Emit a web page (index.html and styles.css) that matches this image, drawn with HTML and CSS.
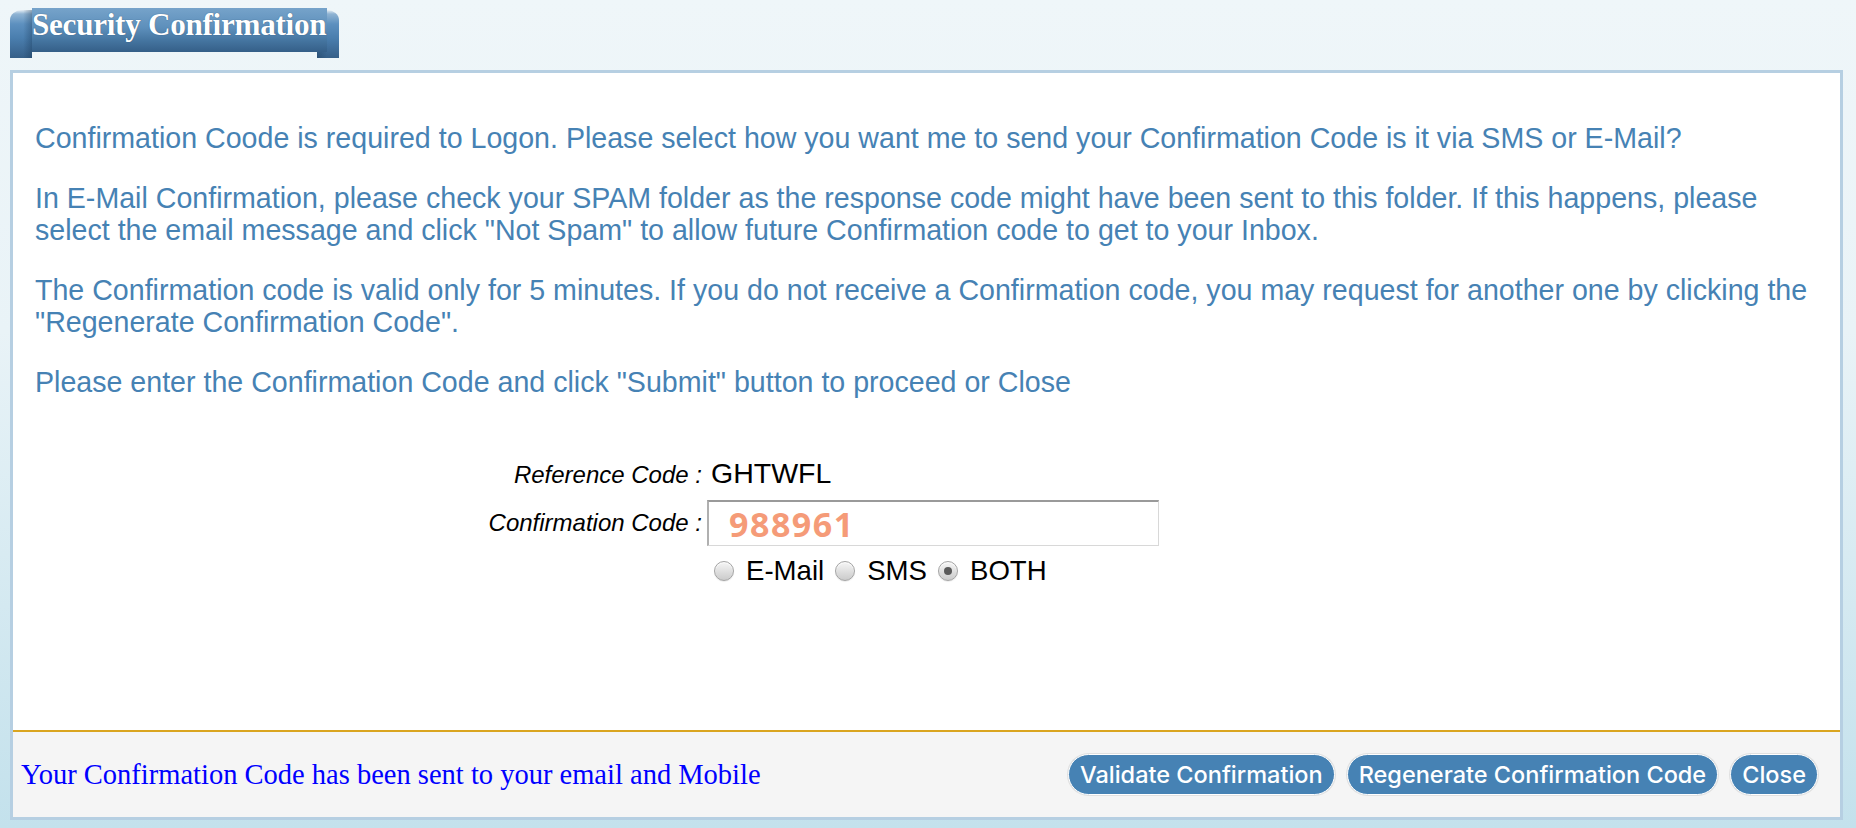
FILE: index.html
```html
<!DOCTYPE html>
<html>
<head>
<meta charset="utf-8">
<title>Security Confirmation</title>
<link rel="stylesheet" href="styles.css">
</head>
<body>
<div class="page">
  <div class="tab">
    <span class="cap cap-left"></span>
    <h1 class="tab-title">Security Confirmation</h1>
    <span class="cap cap-right"></span>
  </div>
  <div class="panel">
    <div class="content">
      <p class="msg">Confirmation Coode is required to Logon. Please select how you want me to send your Confirmation Code is it via SMS or E-Mail?</p>
      <p class="msg">In E-Mail Confirmation, please check your SPAM folder as the response code might have been sent to this folder. If this happens, please select the email message and click "Not Spam" to allow future Confirmation code to get to your Inbox.</p>
      <p class="msg">The Confirmation code is valid only for 5 minutes. If you do not receive a Confirmation code, you may request for another one by clicking the "Regenerate Confirmation Code".</p>
      <p class="msg">Please enter the Confirmation Code and click "Submit" button to proceed or Close</p>
      <div class="form">
        <label class="lbl">Reference Code :</label>
        <div class="ref">GHTWFL</div>
        <label class="lbl" for="code">Confirmation Code :</label>
        <input id="code" class="code" type="text" value="988961">
        <div></div>
        <div class="radios">
          <label class="opt"><input type="radio" name="via" class="rb"><span>E-Mail</span></label>
          <label class="opt"><input type="radio" name="via" class="rb"><span>SMS</span></label>
          <label class="opt"><input type="radio" name="via" class="rb" checked><span>BOTH</span></label>
        </div>
      </div>
    </div>
    <div class="footer">
      <div class="status">Your Confirmation Code has been sent to your email and Mobile</div>
      <div class="actions">
        <button class="btn">Validate Confirmation</button>
        <button class="btn">Regenerate Confirmation Code</button>
        <button class="btn">Close</button>
      </div>
    </div>
  </div>
</div>
</body>
</html>
```
FILE: styles.css
```css
html, body {
  margin: 0;
  padding: 0;
  height: 100%;
}
body {
  background: linear-gradient(to bottom, #eff6f9 0%, #e9f3f7 40%, #c3e1ec 100%);
  font-family: "Liberation Sans", Arial, sans-serif;
}
.page {
  padding: 8px 13px 0 10px;
}
.tab {
  display: flex;
  align-items: flex-start;
  height: 62px;
}
.cap {
  width: 22px;
  height: 48px;
  margin-top: 2px;
  flex: none;
}
.cap-left {
  border-top-left-radius: 12px 10px;
  background:
    linear-gradient(to right, rgba(0,0,0,0) 60%, rgba(20,50,80,0.35) 100%),
    linear-gradient(to bottom, #e6eef4 0px, #8fb3d3 4px, #5d90bf 14px, #4a7eae 28px, #365f88 48px);
}
.cap-right {
  margin-left: -10px;
  border-top-right-radius: 12px 10px;
  background:
    linear-gradient(to left, rgba(0,0,0,0) 55%, rgba(20,50,80,0.3) 100%),
    linear-gradient(to bottom, #e6eef4 0px, #8fb3d3 4px, #5d90bf 14px, #4a7eae 28px, #365f88 48px);
}
.tab-title {
  position: relative;
  z-index: 1;
  margin: 0;
  height: 44px;
  box-sizing: border-box;
  padding: 1px 1px 0 0;
  background: linear-gradient(to bottom, #76a3ca 0%, #5d8fbb 45%, #44749f 75%, #355f88 100%);
  color: #ffffff;
  font-family: "Liberation Serif", "Times New Roman", serif;
  font-weight: bold;
  font-size: 31.2px;
  line-height: 32px;
  letter-spacing: -0.3px;
  text-shadow: 0 0 1px #2a4e70;
  white-space: nowrap;
}
.panel {
  border: 3px solid #b6cfe2;
  background: #ffffff;
}
.content {
  padding: 49px 10px 0 22px;
  height: 659px;
  box-sizing: border-box;
  border-bottom: 2px solid #daa520;
}
.msg {
  margin: 0 0 28px 0;
  color: #4682b4;
  font-size: 28.6px;
  line-height: 32px;
}
.form {
  display: grid;
  grid-template-columns: 214px 452px;
  grid-template-rows: 48px 48px 48px;
  column-gap: 5px;
  margin: 53px 0 0 453px;
  align-items: center;
}
.lbl {
  text-align: right;
  font-style: italic;
  font-size: 24px;
  color: #000;
}
.ref {
  font-size: 28.5px;
  color: #000;
  margin-top: -4px;
  margin-left: 4px;
}
.code {
  box-sizing: border-box;
  width: 452px;
  height: 46px;
  margin: 0;
  padding: 0 0 0 20px;
  border: 1px solid #d8d8d8;
  border-top: 2px solid #9a9a9a;
  border-left: 2px solid #b0b0b0;
  font-family: "Open Sans", "DejaVu Sans", sans-serif;
  font-weight: bold;
  font-size: 34px;
  letter-spacing: 1.5px;
  color: #f59b78;
  outline: none;
}
.radios {
  display: flex;
  align-items: center;
  padding: 0 0 0 7px;
}
.opt {
  display: flex;
  align-items: center;
  font-size: 27.6px;
  color: #000;
}
.opt span {
  margin-left: 12px;
  margin-right: 11px;
}
.rb {
  -webkit-appearance: none;
  appearance: none;
  width: 20px;
  height: 20px;
  margin: 0;
  border-radius: 50%;
  border: 1px solid #a4a4a4;
  background: linear-gradient(to bottom, #f6f6f6 0%, #dedede 55%, #cbcbcb 100%);
  box-shadow: inset 0 1px 1px rgba(255,255,255,0.8), 0 1px 1px rgba(0,0,0,0.08);
  position: relative;
}
.rb:checked::after {
  content: "";
  position: absolute;
  left: 5px;
  top: 5px;
  width: 8px;
  height: 8px;
  border-radius: 50%;
  background: #5a5a5a;
}
.footer {
  display: flex;
  align-items: center;
  justify-content: space-between;
  height: 85px;
  background: #f5f5f5;
  padding: 0 22px 0 8px;
}
.status {
  font-family: "Liberation Serif", "Times New Roman", serif;
  font-size: 28.5px;
  color: #0000ff;
}
.actions {
  display: flex;
  gap: 12px;
  align-items: center;
}
.btn {
  height: 41px;
  padding: 0 11px;
  border: 1px solid #ffffff;
  border-radius: 21px;
  background: #4682b4;
  color: #ffffff;
  font-family: Inter, "Noto Sans", sans-serif;
  font-weight: 500;
  font-size: 23.5px;
  box-shadow: 0 0 0 1px #e0e0e0;
  cursor: pointer;
}
```
